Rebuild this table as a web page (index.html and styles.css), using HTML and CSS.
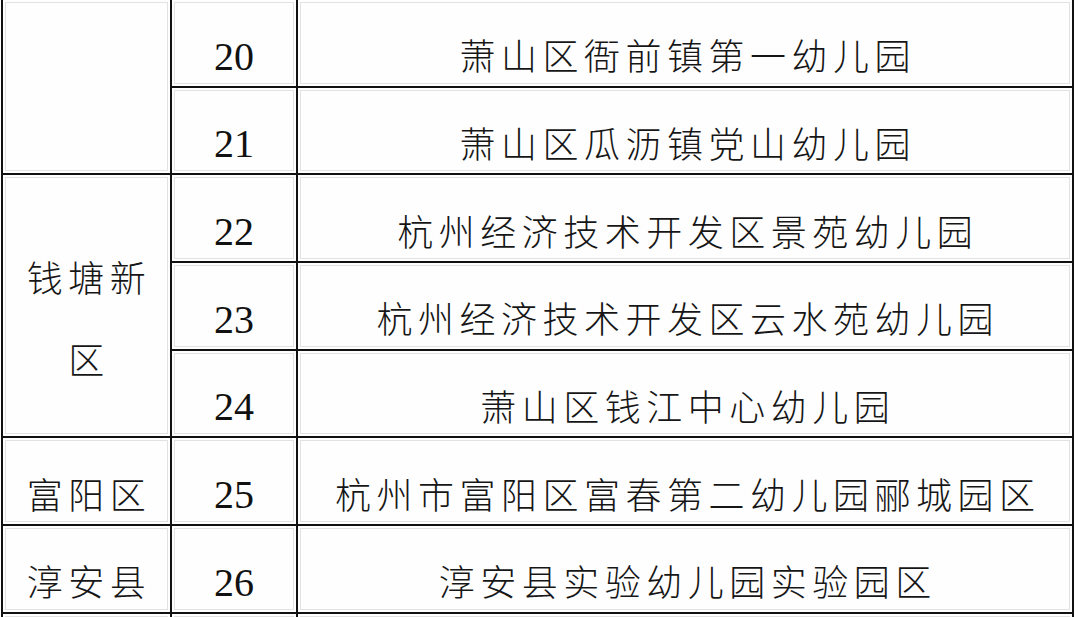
FILE: index.html
```html
<!DOCTYPE html>
<html lang="zh-CN">
<head>
<meta charset="utf-8">
<title>幼儿园名单</title>
<link rel="stylesheet" href="styles.css">
</head>
<body>
<div class="sheet">
  <div class="cell area span2"></div>
  <div class="cell num">20</div>
  <div class="cell name">萧山区衙前镇第一幼儿园</div>
  <div class="cell num">21</div>
  <div class="cell name">萧山区瓜沥镇党山幼儿园</div>

  <div class="cell area span3">钱塘新区</div>
  <div class="cell num">22</div>
  <div class="cell name">杭州经济技术开发区景苑幼儿园</div>
  <div class="cell num">23</div>
  <div class="cell name">杭州经济技术开发区云水苑幼儿园</div>
  <div class="cell num">24</div>
  <div class="cell name">萧山区钱江中心幼儿园</div>

  <div class="cell area">富阳区</div>
  <div class="cell num">25</div>
  <div class="cell name">杭州市富阳区富春第二幼儿园郦城园区</div>

  <div class="cell area">淳安县</div>
  <div class="cell num">26</div>
  <div class="cell name">淳安县实验幼儿园实验园区</div>

  <div class="cell area"></div>
  <div class="cell num"></div>
  <div class="cell name"></div>
</div>
</body>
</html>
```

FILE: styles.css
```css
html, body {
  margin: 0;
  padding: 0;
  background: #ffffff;
  overflow: hidden;
}

.sheet {
  display: grid;
  grid-template-columns: 167px 124px 774px;
  grid-auto-rows: 85.67px;
  gap: 2px;
  padding: 0 2px;
  margin-left: 1px;
  width: max-content;
  background: #111111;
}

.cell {
  background: #fefefe;
  box-shadow: inset 0 0 0 2px #fefefe, inset 0 0 0 3px #e2e2e2;
  display: flex;
  align-items: center;
  justify-content: center;
  text-align: center;
  padding-top: 23px;
  box-sizing: border-box;
  color: #161616;
}

.span2 { grid-row: span 2; }
.span3 { grid-row: span 3; }

.area,
.name {
  font-family: "Noto Sans CJK SC", "Noto Sans CJK TC", sans-serif;
  font-weight: 300;
  font-size: 36px;
  letter-spacing: 5.5px;
  line-height: 82px;
}

.area {
  padding-left: 13px;
  padding-right: 8px;
}

.name {
  padding-left: 5.5px;
}

.num {
  font-family: "Liberation Serif", "Times New Roman", serif;
  font-size: 40px;
  line-height: 82px;
  padding-top: 28px;
  color: #111111;
}
```
